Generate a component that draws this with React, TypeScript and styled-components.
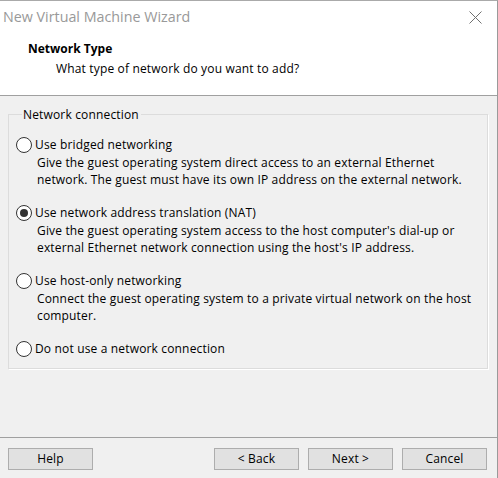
import React from 'react';
import styled, { createGlobalStyle } from 'styled-components';

const Global = createGlobalStyle`
  html, body { margin: 0; padding: 0; background: #f0f0f0; }
  body {
    font-family: "Open Sans", "Noto Sans", sans-serif;
    font-size: 12px;
    letter-spacing: 0.16px;
    color: #000;
  }
`;

const Window = styled.div`
  width: 498px;
  height: 478px;
  box-sizing: border-box;
  border-top: 1px solid #aaaaaa;
  border-right: 1px solid #9a9a9a;
  display: flex;
  flex-direction: column;
  background: #f0f0f0;
  overflow: hidden;
`;

const TitleBar = styled.div`
  height: 31px;
  background: #fff;
  display: flex;
  align-items: center;
  justify-content: space-between;
  padding: 0 15px 0 3px;
`;

const TitleText = styled.span`
  font-family: "Open Sans", "Noto Sans", sans-serif;
  font-size: 14.3px;
  letter-spacing: 0;
  color: #999;
  margin-top: -1px;
`;

const CloseIcon = styled.svg`
  width: 13px;
  height: 13px;
  margin-top: 1px;
`;

const Header = styled.div`
  height: 64px;
  box-sizing: border-box;
  background: #fff;
  border-bottom: 1px solid #a0a0a0;
  padding: 9px 0 0 28px;
`;

const HeaderTitle = styled.div`
  font-weight: 700;
  line-height: 16px;
  letter-spacing: 0;
`;

const HeaderSub = styled.div`
  line-height: 16px;
  margin: 4px 0 0 28px;
`;

const Body = styled.div`
  flex: 1;
  padding: 9px 9px 0 8px;
`;

const GroupBox = styled.fieldset`
  margin: 0;
  padding: 13px 8px 11px 7px;
  border: 1px solid #dcdcdc;
  box-shadow: 1px 1px 0 #fff;
  min-width: 0;
`;

const Legend = styled.legend`
  margin-left: 6px;
  padding: 2px 2px 0 1px;
  line-height: 16px;
`;

const Option = styled.div<{ $last?: boolean }>`
  margin-bottom: ${(p) => (p.$last ? 0 : 16)}px;
`;

const OptionRow = styled.label`
  display: flex;
  align-items: center;
  gap: 3px;
  line-height: 17px;
`;

const RadioCircle = styled.span<{ $checked?: boolean }>`
  width: 14px;
  height: 14px;
  border: 1px solid #333;
  border-radius: 50%;
  background: #fff;
  display: flex;
  align-items: center;
  justify-content: center;
  flex-shrink: 0;
  &::after {
    content: '';
    display: ${(p) => (p.$checked ? 'block' : 'none')};
    width: 8px;
    height: 8px;
    border-radius: 50%;
    background: #333;
  }
`;

const Description = styled.div`
  padding-left: 21px;
  margin-top: 1px;
  line-height: 17px;
`;

const Footer = styled.div`
  height: 41px;
  box-sizing: border-box;
  border-top: 1px solid #a0a0a0;
  display: flex;
  justify-content: space-between;
  padding: 10px 10px 0 8px;
`;

const ButtonGroup = styled.div`
  display: flex;
  gap: 9px;
`;

const Button = styled.button`
  width: 85px;
  height: 22px;
  box-sizing: border-box;
  background: #e1e1e1;
  border: 1px solid #adadad;
  font-family: "Open Sans", "Noto Sans", sans-serif;
  font-size: 12px;
  letter-spacing: 0.16px;
  color: #000;
  padding: 0;
  line-height: 18px;
`;

const options = [
  {
    label: 'Use bridged networking',
    desc: [
      'Give the guest operating system direct access to an external Ethernet',
      'network. The guest must have its own IP address on the external network.',
    ],
  },
  {
    label: 'Use network address translation (NAT)',
    checked: true,
    desc: [
      "Give the guest operating system access to the host computer's dial-up or",
      "external Ethernet network connection using the host's IP address.",
    ],
  },
  {
    label: 'Use host-only networking',
    desc: [
      'Connect the guest operating system to a private virtual network on the host',
      'computer.',
    ],
  },
  { label: 'Do not use a network connection', desc: [] },
];

export default function App() {
  return (
    <>
      <Global />
      <Window>
        <TitleBar>
          <TitleText>New Virtual Machine Wizard</TitleText>
          <CloseIcon viewBox="0 0 13 13">
            <path d="M0.5 0.5 L12.5 12.5 M12.5 0.5 L0.5 12.5" stroke="#707070" strokeWidth="1" fill="none" />
          </CloseIcon>
        </TitleBar>
        <Header>
          <HeaderTitle>Network Type</HeaderTitle>
          <HeaderSub>What type of network do you want to add?</HeaderSub>
        </Header>
        <Body>
          <GroupBox>
            <Legend>Network connection</Legend>
            {options.map((o, i) => (
              <Option key={o.label} $last={i === options.length - 1}>
                <OptionRow>
                  <RadioCircle $checked={o.checked} />
                  {o.label}
                </OptionRow>
                {o.desc.length > 0 && (
                  <Description>
                    {o.desc.map((d) => (
                      <div key={d}>{d}</div>
                    ))}
                  </Description>
                )}
              </Option>
            ))}
          </GroupBox>
        </Body>
        <Footer>
          <Button>Help</Button>
          <ButtonGroup>
            <Button>&lt; Back</Button>
            <Button>Next &gt;</Button>
            <Button>Cancel</Button>
          </ButtonGroup>
        </Footer>
      </Window>
    </>
  );
}
